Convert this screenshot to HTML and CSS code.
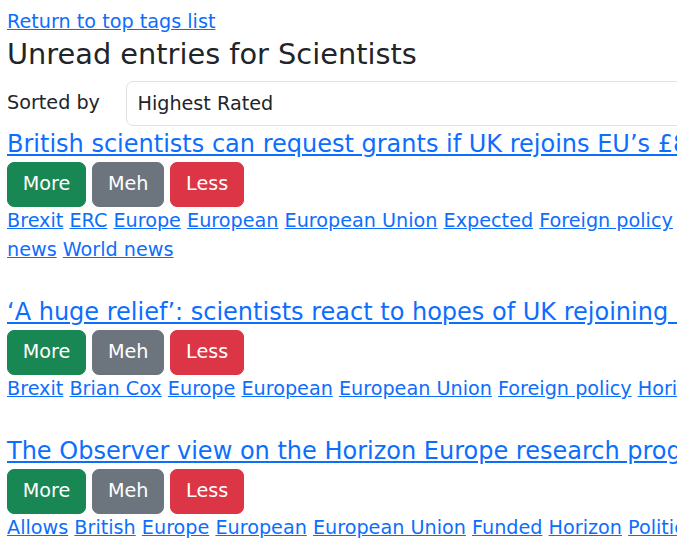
FILE: index.html
```html
<!DOCTYPE html>
<html lang="en">
<head>
<meta charset="utf-8">
<title>Unread entries for Scientists</title>
<link rel="stylesheet" href="styles.css">
</head>
<body>
<main class="page">
  <div class="back"><a href="#">Return to top tags list</a></div>
  <h3 class="heading">Unread entries for Scientists</h3>
  <form class="sort-row">
    <label class="sort-label" for="sort">Sorted by</label>
    <select id="sort" class="sort-select">
      <option>Highest Rated</option>
      <option>Newest</option>
      <option>Oldest</option>
    </select>
  </form>

  <article class="entry">
    <div class="entry-title"><a href="#">British scientists can request grants if UK rejoins EU’s £85bn research scheme</a></div>
    <div class="actions">
      <button class="btn btn-more" type="button">More</button>
      <button class="btn btn-meh" type="button">Meh</button>
      <button class="btn btn-less" type="button">Less</button>
    </div>
    <div class="tags">
      <a href="#">Brexit</a> <a href="#">ERC</a> <a href="#">Europe</a> <a href="#">European</a> <a href="#">European Union</a> <a href="#">Expected</a> <a href="#">Foreign policy</a> <a href="#">Science news</a> <a href="#">World news</a>
    </div>
  </article>

  <article class="entry">
    <div class="entry-title"><a href="#">‘A huge relief’: scientists react to hopes of UK rejoining Horizon Europe</a></div>
    <div class="actions">
      <button class="btn btn-more" type="button">More</button>
      <button class="btn btn-meh" type="button">Meh</button>
      <button class="btn btn-less" type="button">Less</button>
    </div>
    <div class="tags">
      <a href="#">Brexit</a> <a href="#">Brian Cox</a> <a href="#">Europe</a> <a href="#">European</a> <a href="#">European Union</a> <a href="#">Foreign policy</a> <a href="#">Horizon</a>
    </div>
  </article>

  <article class="entry">
    <div class="entry-title"><a href="#">The Observer view on the Horizon Europe research programme</a></div>
    <div class="actions">
      <button class="btn btn-more" type="button">More</button>
      <button class="btn btn-meh" type="button">Meh</button>
      <button class="btn btn-less" type="button">Less</button>
    </div>
    <div class="tags">
      <a href="#">Allows</a> <a href="#">British</a> <a href="#">Europe</a> <a href="#">European</a> <a href="#">European Union</a> <a href="#">Funded</a> <a href="#">Horizon</a> <a href="#">Politics</a>
    </div>
  </article>
</main>
</body>
</html>
```
FILE: styles.css
```css
html {
  overflow: hidden;
}

body {
  margin: 0;
  padding: 8px 7px;
  font-family: "DejaVu Sans", sans-serif;
  font-size: 19.2px;
  line-height: 1.5;
  color: #212529;
  background: #fff;
}

a {
  color: #0d6efd;
  text-decoration: underline;
}

.page {
  width: 780px;
}

.back {
  line-height: 28.8px;
}

.heading {
  margin: 0 0 9.6px;
  font-size: 28.8px;
  font-weight: 400;
  line-height: 1.2;
}

.sort-row {
  display: flex;
  align-items: center;
  gap: 26.5px;
  margin: 0;
}

.sort-label {
  white-space: nowrap;
}

.sort-select {
  flex: 1;
  height: 45.2px;
  padding: 1px 40px 0 10px;
  font-family: inherit;
  font-size: 19.2px;
  line-height: 28.8px;
  color: #212529;
  background: #fff;
  border: 1px solid #dee2e6;
  border-radius: 7px;
  appearance: none;
}

.entry {
  margin-bottom: 29px;
}

.entry-title {
  font-size: 24px;
  line-height: 36px;
  white-space: nowrap;
}

.actions {
  display: flex;
  gap: 6px;
}

.btn {
  font-family: inherit;
  font-size: 19.2px;
  line-height: 28.8px;
  padding: 7.2px 14.8px;
  border: 1px solid transparent;
  border-radius: 7px;
  color: #fff;
  cursor: pointer;
}

.btn-more {
  background: #198754;
  border-color: #198754;
}

.btn-meh {
  background: #6c757d;
  border-color: #6c757d;
}

.btn-less {
  background: #dc3545;
  border-color: #dc3545;
}

.tags {
  line-height: 28.8px;
}
```
